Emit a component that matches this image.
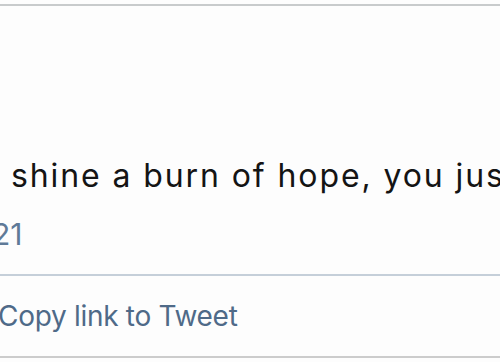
export default function App() {
  return (
    <div
      className="w-[500px] h-[362px] overflow-hidden bg-[#fdfdfd]"
      style={{ fontFamily: 'Inter, "Liberation Sans", Arial, sans-serif' }}
    >
      <div className="h-[4px]" />
      <div className="h-[2px] bg-[#c8cbcc]" />
      <div className="h-[150px]" />
      <div className="pl-[11px] whitespace-nowrap text-[32px] leading-[40px] tracking-[1.9px] text-[#141414]">
        shine a burn of hope, you just
      </div>
      <div className="-ml-[8px] mt-[20px] text-[30px] leading-[36px] text-[#5f7a98]">21</div>
      <div className="mt-[22px] h-[2px] bg-[#c5cfd9]" />
      <div className="-ml-[2px] mt-[22px] whitespace-nowrap text-[28px] leading-[36px] tracking-[-0.3px] text-[#4f6a88]">
        Copy link to Tweet
      </div>
      <div className="mt-[22px] h-[2px] bg-[#cccccc]" />
    </div>
  );
}
